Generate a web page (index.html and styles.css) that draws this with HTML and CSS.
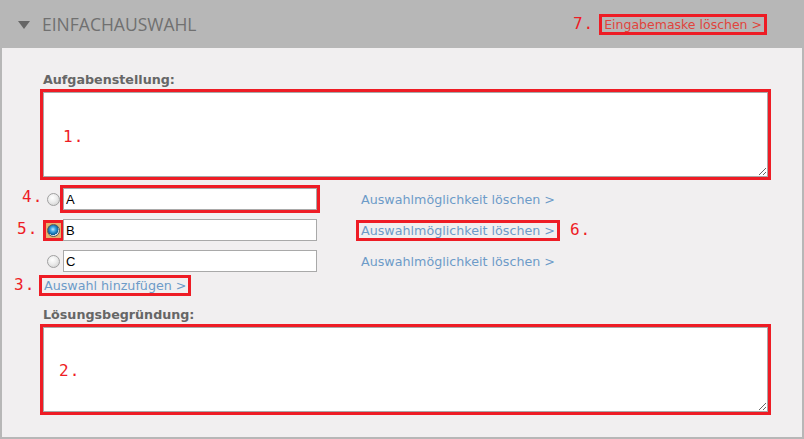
FILE: index.html
```html
<!DOCTYPE html>
<html lang="de">
<head>
<meta charset="utf-8">
<title>Einfachauswahl</title>
<link rel="stylesheet" href="styles.css">
</head>
<body>
<div class="header">
  <span class="tri"></span>
  <h1 class="title">Einfachauswahl</h1>
  <span class="anno anno-7">7.</span>
  <a class="link-red mark" href="#">Eingabemaske löschen &gt;</a>
</div>
<div class="panel">
  <label class="lbl">Aufgabenstellung:</label>
  <div class="ta-wrap">
    <textarea class="ta mark"></textarea>
    <span class="anno anno-1">1.</span>
  </div>

  <div class="choice first">
    <span class="anno anno-4">4.</span>
    <span class="radio"></span>
    <input class="opt mark" type="text" value="A">
    <a class="link" href="#">Auswahlmöglichkeit löschen &gt;</a>
  </div>
  <div class="choice">
    <span class="anno anno-5">5.</span>
    <span class="radio-hl mark"><span class="radio checked"></span></span>
    <input class="opt" type="text" value="B">
    <a class="link mark" href="#">Auswahlmöglichkeit löschen &gt;</a>
    <span class="anno anno-6">6.</span>
  </div>
  <div class="choice">
    <span class="radio"></span>
    <input class="opt" type="text" value="C">
    <a class="link" href="#">Auswahlmöglichkeit löschen &gt;</a>
  </div>

  <div class="add-row">
    <span class="anno anno-3">3.</span>
    <a class="link add mark" href="#">Auswahl hinzufügen &gt;</a>
  </div>

  <label class="lbl lbl-2">Lösungsbegründung:</label>
  <div class="ta-wrap">
    <textarea class="ta mark"></textarea>
    <span class="anno anno-2">2.</span>
  </div>
</div>
</body>
</html>
```

FILE: styles.css
```css
* { box-sizing: border-box; }

html, body {
  margin: 0;
  padding: 0;
  background: #b7b7b7;
}

body {
  width: 804px;
  height: 439px;
  font-family: "DejaVu Sans", Verdana, sans-serif;
  font-size: 12.7px;
  overflow: hidden;
}

.mark {
  outline: 3px solid #ee1c25;
}

.anno {
  font-family: "DejaVu Sans Mono", "Liberation Mono", monospace;
  font-size: 16px;
  line-height: 22px;
  letter-spacing: 1px;
  color: #ee1c25;
}

/* header */
.header {
  height: 48px;
  background: #b7b7b7;
  display: flex;
  align-items: center;
  padding: 0 40px 0 18px;
}

.tri {
  width: 0;
  height: 0;
  border-left: 6px solid transparent;
  border-right: 6px solid transparent;
  border-top: 8px solid #666;
  margin-top: 1px;
}

.title {
  margin: 0 0 0 12px;
  font-family: "Open Sans", sans-serif;
  font-weight: normal;
  font-size: 17.5px;
  text-transform: uppercase;
  color: #707070;
  flex: 1;
}

.anno-7 {
  margin-right: 8px;
}

.link-red {
  display: inline-block;
  line-height: 15px;
  padding: 0 2px;
  font-size: 12.5px;
  color: #e0443c;
  text-decoration: none;
}

/* panel */
.panel {
  height: 391px;
  background: #f1eff0;
  border: 2px solid #b7b7b7;
  border-top: 0;
  padding: 24px 0 0 41px;
}

.lbl {
  display: block;
  font-weight: bold;
  color: #666;
  line-height: 15px;
  margin-bottom: 5px;
}

.lbl-2 {
  margin-top: 14px;
}

.ta-wrap {
  position: relative;
  width: 725px;
  height: 85px;
}

.ta {
  display: block;
  width: 725px;
  height: 85px;
  margin: 0;
  border: 1px solid #a9a9a9;
  background: #fff;
  resize: both;
}

.anno-1 { position: absolute; left: 20px; top: 34px; }
.anno-2 { position: absolute; left: 16px; top: 33px; }

.choice {
  position: relative;
  display: flex;
  align-items: center;
  height: 22px;
  margin-top: 9px;
}

.choice.first {
  margin-top: 11px;
}

.anno-4 { position: absolute; left: -21px; top: -2px; }
.anno-5 { position: absolute; left: -26px; top: -1px; }
.anno-6 { margin-left: 13px; }

.radio {
  width: 13px;
  height: 13px;
  margin: 0 3px 0 4px;
  border-radius: 50%;
  border: 1px solid #a0a0a0;
  background: radial-gradient(circle at 40% 35%, #ffffff 0%, #ececec 45%, #c9c9c9 100%);
  flex: none;
}

.radio-hl {
  display: flex;
  padding: 1px;
  margin: 0 2px 0 3px;
  background: #e3b46e;
  flex: none;
}

.radio.checked {
  margin: 0;
  border-color: #5a5a5a;
  background: radial-gradient(circle at 45% 40%, #bfeaff 0%, #3aa0dc 30%, #0b5d96 60%, #e8e8e8 64%, #c4c4c4 100%);
}

.opt {
  width: 254px;
  height: 22px;
  margin: 0;
  padding: 1px 2px 0;
  border: 1px solid #a9a9a9;
  background: #fff;
  font-family: "Liberation Sans", Arial, sans-serif;
  font-size: 13px;
  color: #000;
}

.link {
  display: inline-block;
  line-height: 15px;
  padding: 0 2px;
  margin-left: 42px;
  color: #6d9bc8;
  text-decoration: none;
}

.add-row {
  position: relative;
  margin-top: 6px;
  height: 15px;
}

.link.add {
  margin-left: -1px;
}

.anno-3 {
  position: absolute;
  left: -29px;
  top: -4px;
}
```
